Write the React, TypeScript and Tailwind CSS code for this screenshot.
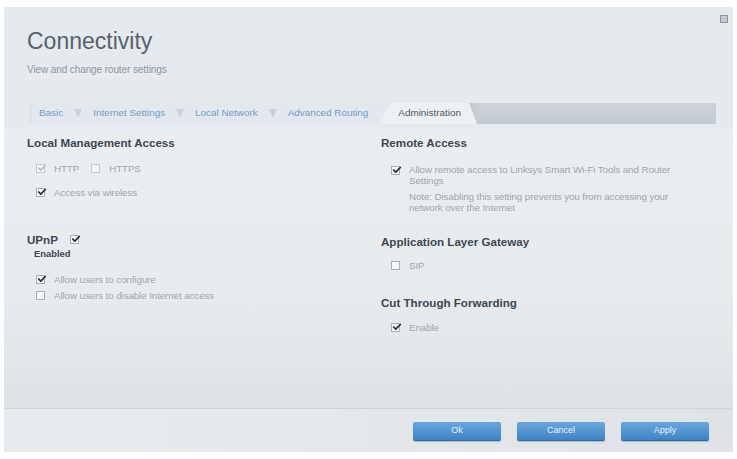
import { Check } from "lucide-react";

const Box = ({ checked, faded }: { checked?: boolean; faded?: boolean }) => (
  <span
    className={`relative flex h-[9px] w-[9px] shrink-0 items-center justify-center border bg-[#f7f8f9] ${
      faded ? "border-[#c3c9ce]" : "border-[#a9b1b8]"
    }`}
  >
    {checked && (
      <Check
        strokeWidth={4}
        className={`absolute -top-[2px] left-0 h-[10px] w-[10px] ${faded ? "text-[#b7bec4]" : "text-[#22282d]"}`}
      />
    )}
  </span>
);

const Item = ({ label, checked, faded }: { label: string; checked?: boolean; faded?: boolean }) => (
  <div className="flex items-center gap-[9px] text-[9.8px] leading-[11px] tracking-[-0.1px] text-[#9ea6ad]">
    <Box checked={checked} faded={faded} />
    <span>{label}</span>
  </div>
);

const Heading = ({ children }: { children: string }) => (
  <h2 className="text-[11.6px] font-bold leading-[13px] text-[#3d4750]">{children}</h2>
);

const Divider = () => (
  <span className="mx-[11px] h-0 w-0 border-x-[4px] border-t-[9px] border-x-transparent border-t-[#c9d0d6]" />
);

const tabs = ["Basic", "Internet Settings", "Local Network", "Advanced Routing"];

const App = () => {
  return (
    <div className="h-[459px] w-[737px] overflow-hidden bg-white pl-[4px] pt-[7px] font-['Liberation_Sans',Arial,sans-serif]">
      <div className="relative flex h-[445px] w-[729px] flex-col bg-[#e5eaee]">
        <span className="absolute right-[5px] top-[8px] h-[8px] w-[8px] border border-[#8d959c] bg-[#c4cad0]" />

        <div className="h-[96px] pl-[23px] pt-[20px]">
          <h1 className="text-[23px] leading-[28px] text-[#58626b]">Connectivity</h1>
          <p className="mt-[7px] text-[10px] tracking-[-0.1px] text-[#8e979f]">View and change router settings</p>
        </div>

        <div className="flex h-[21px] items-stretch pl-[26px] text-[9.9px]">
          <div className="flex items-center border-l border-[#d6dce1] bg-[#e2e8ed] pl-[8px] text-[#729fc6]">
            {tabs.map((t, i) => (
              <div key={t} className="flex items-center">
                <span>{t}</span>
                {i < tabs.length - 1 && <Divider />}
              </div>
            ))}
            <span className="ml-[12px] h-full w-[10px] bg-[linear-gradient(to_right_bottom,#e2e8ed_50%,#eef1f4_50%)]" />
          </div>
          <div className="flex items-center bg-[#eef1f4] pl-[8px] pr-[8px] text-[#4d565e]">Administration</div>
          <span className="h-full w-[8px] bg-[linear-gradient(to_left_bottom,#c6cdd3_50%,#eef1f4_50%)]" />
          <div className="flex-1 bg-[linear-gradient(#cdd3d8,#c3cad0)]" />
          <div className="w-[17px]" />
        </div>

        <div className="mt-[4px] flex flex-1 bg-[linear-gradient(#ebeef1,#e8ebee_60%,#dee2e6)] pt-[8px]">
          <div className="w-[377px] pl-[23px]">
            <Heading>Local Management Access</Heading>
            <div className="ml-[9px] mt-[14px] flex items-center gap-[12px]">
              <Item label="HTTP" checked faded />
              <Item label="HTTPS" faded />
            </div>
            <div className="ml-[9px] mt-[13px]">
              <Item label="Access via wireless" checked />
            </div>

            <div className="mt-[33px] flex items-center gap-[12px]">
              <span className="text-[11.6px] font-bold text-[#3d4750]">UPnP</span>
              <Box checked />
            </div>
            <p className="ml-[7px] text-[9.4px] font-bold leading-[11px] text-[#3d4750]">Enabled</p>
            <div className="ml-[9px] mt-[15px] flex flex-col gap-[5px]">
              <Item label="Allow users to configure" checked />
              <Item label="Allow users to disable Internet access" />
            </div>
          </div>

          <div>
            <Heading>Remote Access</Heading>
            <div className="ml-[10px] mt-[16px] flex gap-[9px] text-[9.8px] leading-[10.5px] tracking-[-0.1px] text-[#9ea6ad]">
              <span className="mt-[1px]"><Box checked /></span>
              <div className="w-[276px]">
                <p>Allow remote access to Linksys Smart Wi-Fi Tools and Router Settings</p>
                <p className="mt-[6px]">Note: Disabling this setting prevents you from accessing your network over the Internet</p>
              </div>
            </div>

            <div className="mt-[22px]">
              <Heading>Application Layer Gateway</Heading>
            </div>
            <div className="ml-[10px] mt-[12px]">
              <Item label="SIP" />
            </div>

            <div className="mt-[25px]">
              <Heading>Cut Through Forwarding</Heading>
            </div>
            <div className="ml-[10px] mt-[13px]">
              <Item label="Enable" checked />
            </div>
          </div>
        </div>

        <div className="flex h-[44px] items-center justify-end gap-[16px] border-t border-[#cfd5da] bg-[linear-gradient(to_right,#e9ecef,#dfe3e7)] pr-[24px] pt-[2px]">
          {["Ok", "Cancel", "Apply"].map((b) => (
            <button
              key={b}
              className="h-[19px] w-[88px] rounded-[2px] border-b border-[#2f6aa3] bg-[linear-gradient(#6aa6dc,#3f83c4)] text-[9px] text-[#e8f1fa] shadow-[0_1px_1px_rgba(0,0,0,0.2)]"
            >
              {b}
            </button>
          ))}
        </div>
      </div>
    </div>
  );
};

export default App;
